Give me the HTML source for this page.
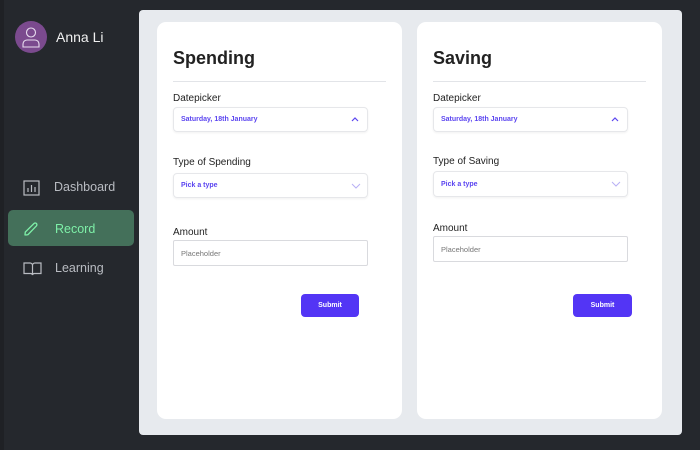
<!DOCTYPE html>
<html><head><style>
*{box-sizing:border-box;margin:0;padding:0}
body{width:700px;height:450px;background:#25282d;font-family:"Liberation Sans",sans-serif;position:relative;overflow:hidden}
.abs{position:absolute}
.edge{left:0;top:0;width:4px;height:450px;background:#1f2125}
.main{left:139px;top:10px;width:543px;height:425px;background:#e7eaee;border-radius:4px}
.card{background:#fff;border-radius:9px;top:22px;height:397px;width:245px}
.title{font-size:18px;font-weight:bold;color:#222}
.line{height:1px;background:#e2e4e8}
.lbl{font-size:10px;color:#222}
.box{border:1px solid #e6e7ea;border-radius:4px;font-size:7px;font-weight:bold;color:#5b45f0;padding-left:7px;display:flex;align-items:center;box-shadow:0 1px 2px rgba(0,0,0,.06)}
.inp{border:1px solid #d9dade;border-radius:2px;font-size:7.5px;color:#777;padding-left:7px;display:flex;align-items:center}
.btn{background:#5335f5;color:#fff;border-radius:4px;font-size:7px;font-weight:bold;display:flex;align-items:center;justify-content:center}
.nav{font-size:12.5px;color:#b9bcc2}
</style></head><body>
<div class="abs edge"></div>
<div class="abs" style="left:15px;top:21px;width:32px;height:32px;border-radius:50%;background:#7b4a8e"></div>
<svg class="abs" style="left:15px;top:21px" width="32" height="32" viewBox="0 0 32 32" fill="none" stroke="#e8dcef" stroke-width="1.1"><circle cx="16" cy="11.5" r="4.5"/><path d="M8 26v-3a4 4 0 0 1 4-4h8a4 4 0 0 1 4 4v3z"/></svg>
<div class="abs" style="left:56px;top:29px;font-size:14px;color:#f0f0f0">Anna Li</div>

<svg class="abs" style="left:23px;top:180px" width="17" height="16" viewBox="0 0 17 16" fill="none" stroke="#b9bcc2" stroke-width="1.2"><rect x="1" y="1" width="15" height="14"/><path d="M5 12V8M8.5 12V5M12 12V7"/></svg>
<div class="abs nav" style="left:54px;top:180px">Dashboard</div>
<div class="abs" style="left:8px;top:210px;width:126px;height:36px;border-radius:5px;background:#44705a"></div>
<svg class="abs" style="left:23px;top:221px" width="16" height="16" viewBox="0 0 16 16" fill="none" stroke="#7ef0a8" stroke-width="1.3"><path d="M3 14l-1 -0.2 0.3-2.8L11 2.5a1.6 1.6 0 0 1 2.4 2.4L5 13.6z"/></svg>
<div class="abs nav" style="left:55px;top:222px;color:#7ef0a8">Record</div>
<svg class="abs" style="left:23px;top:261px" width="19" height="15" viewBox="0 0 19 15" fill="none" stroke="#b9bcc2" stroke-width="1.2"><path d="M1 2h6a2.5 2.5 0 0 1 2.5 2.5V14a2 2 0 0 0-2-1.5H1zM18 2h-6a2.5 2.5 0 0 0-2.5 2.5V14a2 2 0 0 1 2-1.5H18z"/></svg>
<div class="abs nav" style="left:55px;top:261px">Learning</div>

<div class="abs main"></div>
<div class="abs card" style="left:157px"></div>
<div class="abs card" style="left:417px"></div>

<div class="abs title" style="left:173px;top:48px">Spending</div>
<div class="abs line" style="left:173px;top:81px;width:213px"></div>
<div class="abs lbl" style="left:173px;top:93px">Datepicker</div>
<div class="abs box" style="left:173px;top:107px;width:195px;height:25px">Saturday, 18th January</div>
<div class="abs lbl" style="left:173px;top:157px">Type of Spending</div>
<div class="abs box" style="left:173px;top:173px;width:195px;height:25px">Pick a type</div>
<div class="abs lbl" style="left:173px;top:227px">Amount</div>
<div class="abs inp" style="left:173px;top:240px;width:195px;height:26px">Placeholder</div>
<div class="abs btn" style="left:301px;top:294px;width:58px;height:23px">Submit</div>
<svg class="abs" style="left:351px;top:117px" width="8" height="5" fill="none" stroke="#5b45f0" stroke-width="1.2"><path d="M1 4l3-3 3 3"/></svg>
<svg class="abs" style="left:351px;top:183px" width="10" height="6" fill="none" stroke="#b8b0f5" stroke-width="1"><path d="M1 1l4 4 4-4"/></svg>

<div class="abs title" style="left:433px;top:48px">Saving</div>
<div class="abs line" style="left:433px;top:81px;width:213px"></div>
<div class="abs lbl" style="left:433px;top:93px">Datepicker</div>
<div class="abs box" style="left:433px;top:107px;width:195px;height:25px">Saturday, 18th January</div>
<div class="abs lbl" style="left:433px;top:156px">Type of Saving</div>
<div class="abs box" style="left:433px;top:171px;width:195px;height:26px">Pick a type</div>
<div class="abs lbl" style="left:433px;top:223px">Amount</div>
<div class="abs inp" style="left:433px;top:236px;width:195px;height:26px">Placeholder</div>
<div class="abs btn" style="left:573px;top:294px;width:59px;height:23px">Submit</div>
<svg class="abs" style="left:611px;top:117px" width="8" height="5" fill="none" stroke="#5b45f0" stroke-width="1.2"><path d="M1 4l3-3 3 3"/></svg>
<svg class="abs" style="left:611px;top:181px" width="10" height="6" fill="none" stroke="#b8b0f5" stroke-width="1"><path d="M1 1l4 4 4-4"/></svg>
</body></html>
